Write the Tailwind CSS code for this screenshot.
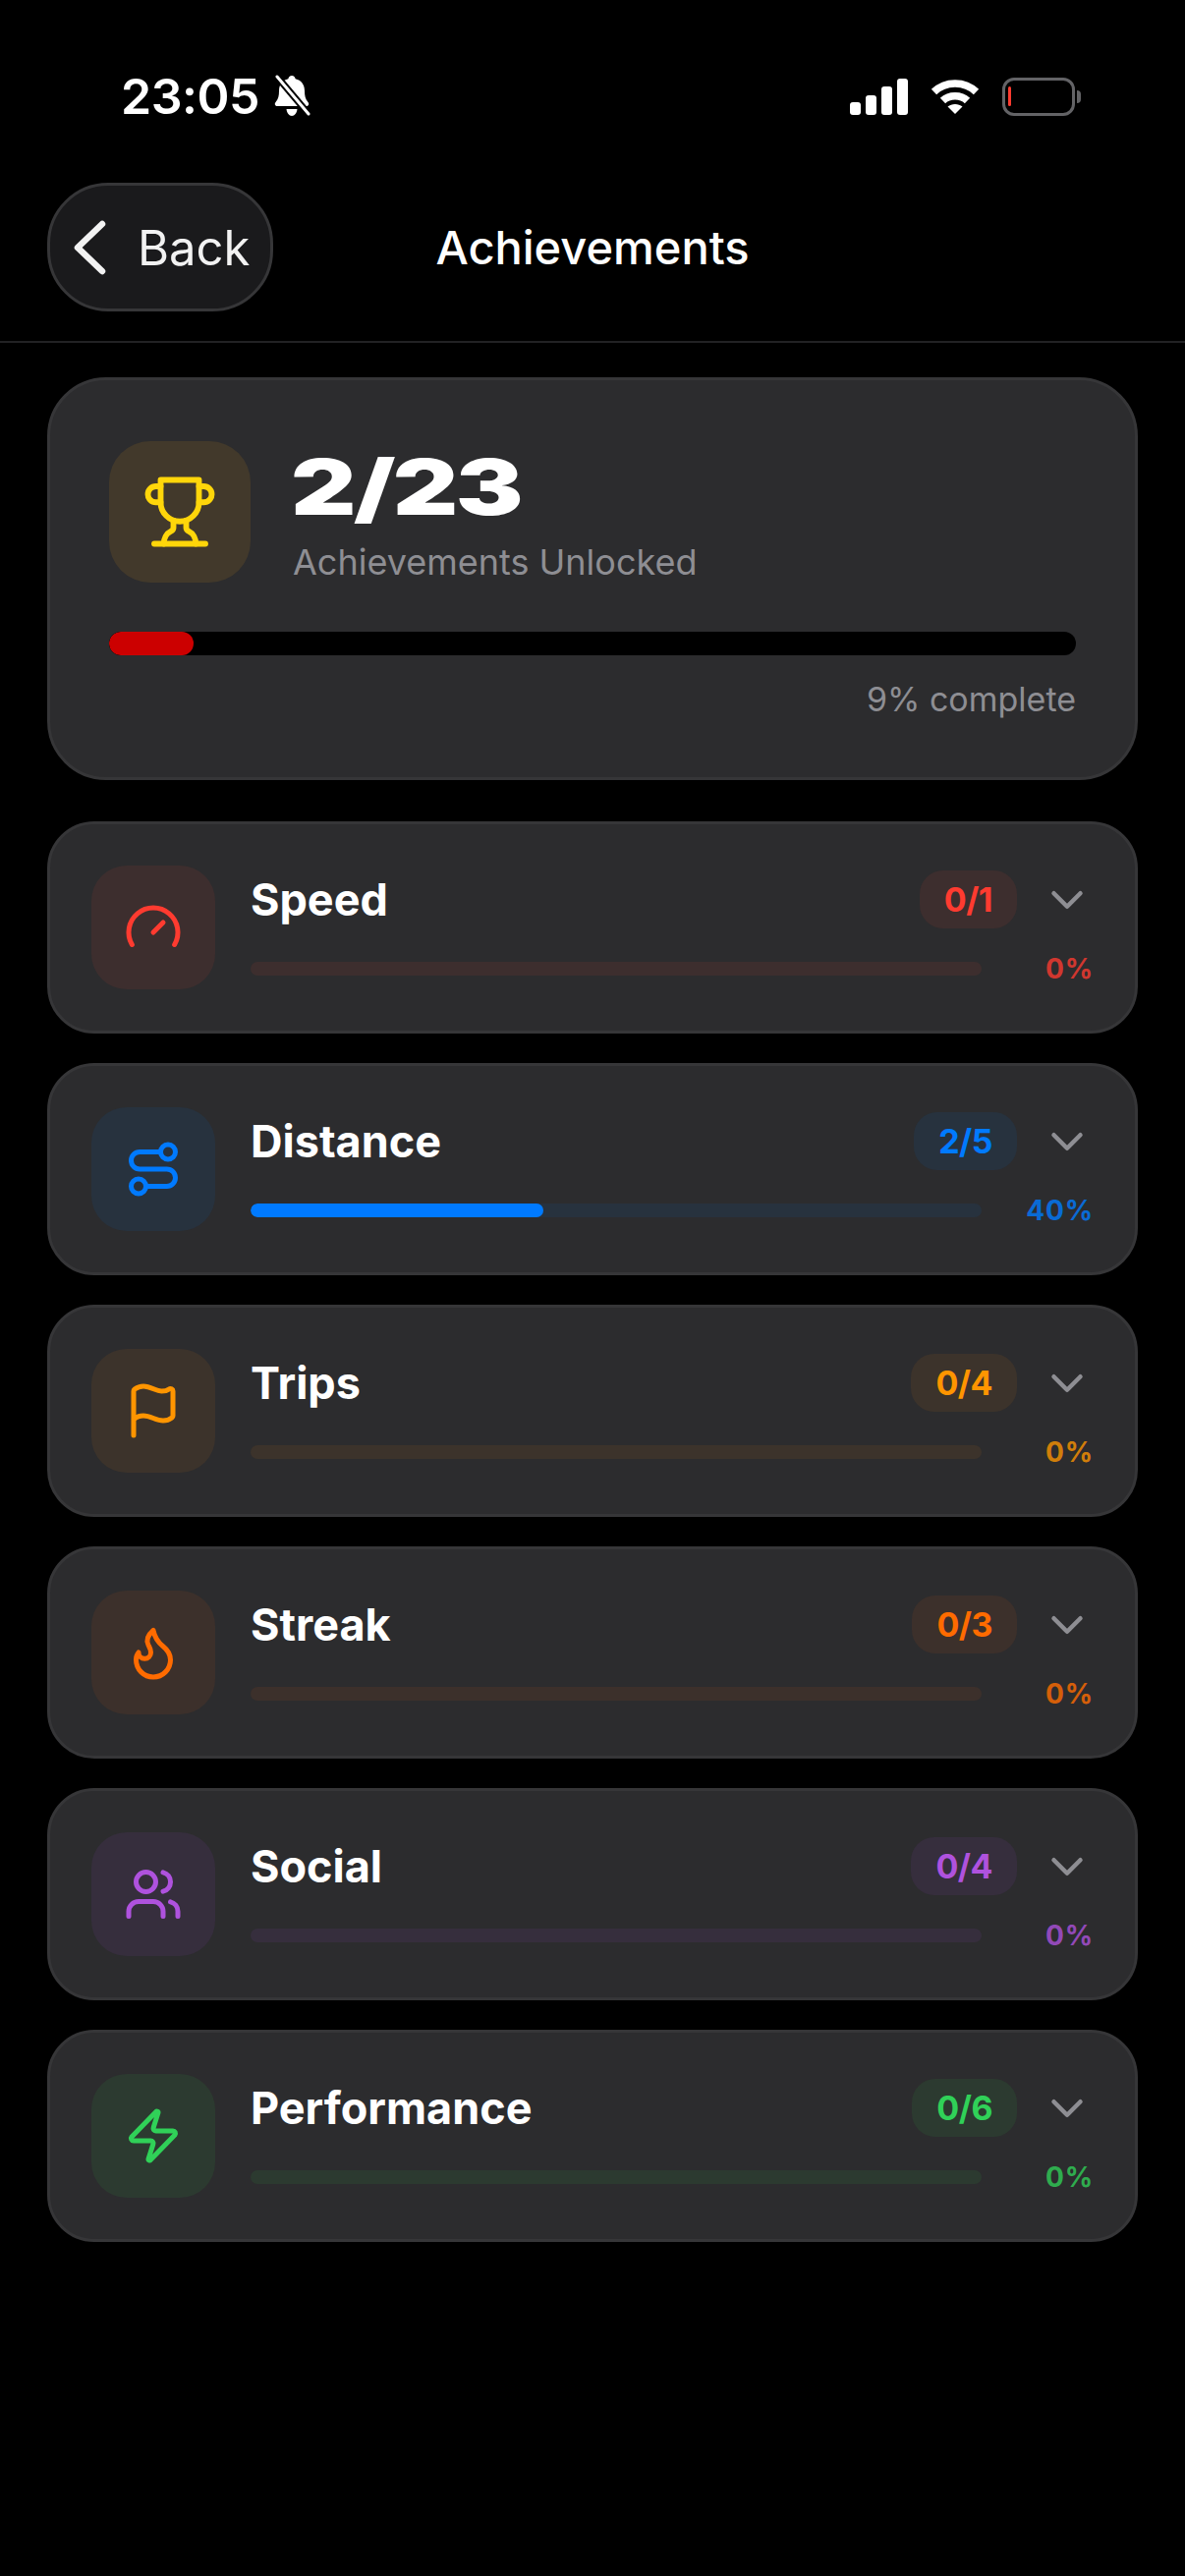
<!DOCTYPE html>
<html lang="en">
<head>
  <meta charset="UTF-8" />
  <meta name="viewport" content="width=device-width, initial-scale=1.0"/>
  <title>Achievements</title>
  <script src="https://cdn.jsdelivr.net/npm/@tailwindcss/browser@4"></script>
</head>
<body class="bg-black min-h-screen w-[1206px] h-[2622px] overflow-hidden text-white font-['Inter',sans-serif]">

  <!-- Status bar -->
  <div class="h-[148px] pt-[48px] pl-[123px] pr-[106px] flex items-center justify-between">
    <div class="flex items-center gap-[12px]">
      <span class="text-[50px] leading-none font-semibold tracking-[-0.5px]">23:05</span>
      <svg class="w-[42px] h-[44px]" viewBox="0 0 42 44" fill="white">
        <path d="M21 1c2 0 3.400 1.400 3.600 3.300 6 1.300 9.400 6 9.400 12.200 0 5 .8 8.500 3.300 11.200 1.500 1.600 1.200 4.300-1.500 4.300H6.200c-2.700 0-3-2.700-1.500-4.300C7.200 25 8 21.500 8 16.500c0-6.200 3.400-10.900 9.400-12.200C17.600 2.400 19 1 21 1z"/>
        <path d="M15.500 35h11c-.4 4-2.700 7-5.500 7s-5.100-3-5.500-7z"/>
        <path d="M6 2l32 38" stroke="black" stroke-width="7"/>
        <path d="M6 2l32 38" stroke="white" stroke-width="3" stroke-linecap="round"/>
      </svg>
    </div>
    <div class="flex items-center gap-[23px]">
      <div class="flex items-end gap-[5px] h-[37px]">
        <div class="w-[11px] h-[13px] rounded-[3px] bg-white"></div>
        <div class="w-[11px] h-[20px] rounded-[3px] bg-white"></div>
        <div class="w-[11px] h-[29px] rounded-[3px] bg-white"></div>
        <div class="w-[11px] h-[37px] rounded-[3px] bg-white"></div>
      </div>
      <svg class="w-[50px] h-[37px]" viewBox="0 0 50 37" fill="none" stroke="white" stroke-width="7.500">
        <path d="M3.500 13.500C15 2 35 2 46.500 13.500"/>
        <path d="M12.500 22.500C19 16 31 16 37.500 22.500"/>
        <path d="M25 36L17.500 28.500C21.500 25 28.500 25 32.500 28.500z" fill="white" stroke="none"/>
      </svg>
      <div class="flex items-center gap-[2px]">
        <div class="w-[74px] h-[39px] rounded-[12px] border-[3px] border-[#636366] flex items-center pl-[3px]">
          <div class="w-[3px] h-[20px] rounded-full bg-[#ff3b30]"></div>
        </div>
        <div class="w-[4px] h-[13px] rounded-r-full bg-[#636366]"></div>
      </div>
    </div>
  </div>

  <!-- Nav -->
  <div class="h-[201px] pt-[38px] pl-[48px] pr-[48px] border-b-2 border-[#222224] grid grid-cols-[1fr_auto_1fr] items-start">
    <div class="w-[230px] h-[131px] rounded-[62px] bg-[#1a1a1c] border-[3px] border-[#363638] flex items-center pl-[22px] gap-[31px]">
      <svg class="w-[36px] h-[56px]" viewBox="0 0 36 56" fill="none" stroke="#f2f2f2" stroke-width="6.500" stroke-linecap="round" stroke-linejoin="round">
        <path d="M31 4L6 28l25 24"/>
      </svg>
      <span class="pt-[2px] text-[49px] leading-none font-normal text-[#f2f2f2]">Back</span>
    </div>
    <h1 class="h-[131px] pt-[2px] flex items-center text-[47px] font-medium">Achievements</h1>
    <div></div>
  </div>

  <div class="px-[48px] pt-[35px]">

    <!-- Summary card -->
    <div class="h-[410px] rounded-[60px] bg-[#2c2c2e] border-[3px] border-[#363638] pt-[62px] px-[60px]">
      <div class="flex items-start gap-[43px]">
        <div class="w-[144px] h-[144px] rounded-[42px] bg-[#42392b] flex items-center justify-center">
          <svg class="w-[78px] h-[78px]" viewBox="0 0 24 24" fill="none" stroke="#ffd60a" stroke-width="1.800" stroke-linecap="round" stroke-linejoin="round">
            <path d="M6 9H4.500a2.500 2.500 0 0 1 0-5H6"/>
            <path d="M18 9h1.500a2.500 2.500 0 0 0 0-5H18"/>
            <path d="M4 22h16"/>
            <path d="M10 14.660V17c0 .550-.470.980-.970 1.210C7.850 18.750 7 20.240 7 22"/>
            <path d="M14 14.660V17c0 .550.470.980.970 1.210C16.150 18.750 17 20.240 17 22"/>
            <path d="M18 2H6v7a6 6 0 0 0 12 0V2Z"/>
          </svg>
        </div>
        <div class="flex flex-col gap-[18px] pt-[11px]">
          <div class="-ml-[2px] h-[72px] text-[78px] leading-[72px] font-black tracking-[-2px] origin-left scale-x-[1.32]">2/23</div>
          <div class="h-[44px] text-[36px] leading-[44px] text-[#8e8e93]">Achievements Unlocked</div>
        </div>
      </div>
      <div class="mt-[49px] h-[24px] rounded-full bg-black overflow-hidden">
        <div class="h-full w-[86px] rounded-full bg-[#cc0000]"></div>
      </div>
      <div class="mt-[23px] text-right text-[34px] leading-[44px] text-[#8e8e93]">9% complete</div>
    </div>

    <div class="mt-[42px] flex flex-col gap-[30px]">

      <!-- Speed -->
      <div class="h-[216px] rounded-[48px] bg-[#2c2c2e] border-[3px] border-[#363638] pl-[42px] pr-[39px] flex items-center gap-[36px]">
        <div class="w-[126px] h-[126px] rounded-[36px] bg-[#3d2e2e] flex items-center justify-center shrink-0">
          <svg class="w-[60px] h-[60px]" viewBox="0 0 24 24" fill="none" stroke="#ff3b30" stroke-width="2" stroke-linecap="round" stroke-linejoin="round">
            <path d="m12 14 4-4"/><path d="M3.340 19a10 10 0 1 1 17.320 0"/>
          </svg>
        </div>
        <div class="flex-1 flex flex-col pb-[2px]">
          <div class="h-[60px] flex items-center justify-between">
            <span class="text-[45px] leading-none font-bold">Speed</span>
            <div class="flex items-center gap-[24px] pr-[3px]">
              <span class="h-[59px] px-[25px] rounded-[24px] bg-[#3d2e2e] text-[#ff3b30] text-[34px] tracking-[-0.5px] font-bold flex items-center">0/1</span>
              <svg class="mt-[2px] w-[54px] h-[54px]" viewBox="0 0 24 24" fill="none" stroke="#8e8e93" stroke-width="2" stroke-linecap="round" stroke-linejoin="round"><path d="m6 9 6 6 6-6"/></svg>
            </div>
          </div>
          <div class="mt-[26px] h-[30px] flex items-center justify-between">
            <div class="w-[744px] h-[14px] rounded-full bg-[#3d2e2e]"></div>
            <span class="mr-[3px] text-[28px] leading-none font-bold tracking-[0.8px] text-[#ff3b30]/80">0%</span>
          </div>
        </div>
      </div>

      <!-- Distance -->
      <div class="h-[216px] rounded-[48px] bg-[#2c2c2e] border-[3px] border-[#363638] pl-[42px] pr-[39px] flex items-center gap-[36px]">
        <div class="w-[126px] h-[126px] rounded-[36px] bg-[#27323e] flex items-center justify-center shrink-0">
          <svg class="w-[60px] h-[60px]" viewBox="0 0 24 24" fill="none" stroke="#007aff" stroke-width="2" stroke-linecap="round" stroke-linejoin="round">
            <circle cx="6" cy="19" r="3"/><path d="M9 19h8.500a3.500 3.500 0 0 0 0-7h-11a3.500 3.500 0 0 1 0-7H15"/><circle cx="18" cy="5" r="3"/>
          </svg>
        </div>
        <div class="flex-1 flex flex-col pb-[2px]">
          <div class="h-[60px] flex items-center justify-between">
            <span class="text-[45px] leading-none font-bold">Distance</span>
            <div class="flex items-center gap-[24px] pr-[3px]">
              <span class="h-[59px] px-[25px] rounded-[24px] bg-[#27323e] text-[#007aff] text-[34px] tracking-[-0.5px] font-bold flex items-center">2/5</span>
              <svg class="mt-[2px] w-[54px] h-[54px]" viewBox="0 0 24 24" fill="none" stroke="#8e8e93" stroke-width="2" stroke-linecap="round" stroke-linejoin="round"><path d="m6 9 6 6 6-6"/></svg>
            </div>
          </div>
          <div class="mt-[26px] h-[30px] flex items-center justify-between">
            <div class="w-[744px] h-[14px] rounded-full bg-[#27323e] overflow-hidden">
              <div class="h-full rounded-full bg-[#007aff]" style="width: 40%"></div>
            </div>
            <span class="mr-[3px] text-[28px] leading-none font-bold tracking-[0.8px] text-[#007aff]/80">40%</span>
          </div>
        </div>
      </div>

      <!-- Trips -->
      <div class="h-[216px] rounded-[48px] bg-[#2c2c2e] border-[3px] border-[#363638] pl-[42px] pr-[39px] flex items-center gap-[36px]">
        <div class="w-[126px] h-[126px] rounded-[36px] bg-[#3c332b] flex items-center justify-center shrink-0">
          <svg class="w-[60px] h-[60px]" viewBox="0 0 24 24" fill="none" stroke="#ff9500" stroke-width="2" stroke-linecap="round" stroke-linejoin="round">
            <path d="M4 22V4a1 1 0 0 1 .4-.8A6 6 0 0 1 8 2c3 0 5 2 7.333 2q2 0 3.067-.8A1 1 0 0 1 20 4v10a1 1 0 0 1-.4.8A6 6 0 0 1 16 16c-3 0-5-2-8-2a6 6 0 0 0-4 1.528"/>
          </svg>
        </div>
        <div class="flex-1 flex flex-col pb-[2px]">
          <div class="h-[60px] flex items-center justify-between">
            <span class="text-[45px] leading-none font-bold">Trips</span>
            <div class="flex items-center gap-[24px] pr-[3px]">
              <span class="h-[59px] px-[25px] rounded-[24px] bg-[#3c332b] text-[#ff9500] text-[34px] tracking-[-0.5px] font-bold flex items-center">0/4</span>
              <svg class="mt-[2px] w-[54px] h-[54px]" viewBox="0 0 24 24" fill="none" stroke="#8e8e93" stroke-width="2" stroke-linecap="round" stroke-linejoin="round"><path d="m6 9 6 6 6-6"/></svg>
            </div>
          </div>
          <div class="mt-[26px] h-[30px] flex items-center justify-between">
            <div class="w-[744px] h-[14px] rounded-full bg-[#3c332b]"></div>
            <span class="mr-[3px] text-[28px] leading-none font-bold tracking-[0.8px] text-[#ff9500]/80">0%</span>
          </div>
        </div>
      </div>

      <!-- Streak -->
      <div class="h-[216px] rounded-[48px] bg-[#2c2c2e] border-[3px] border-[#363638] pl-[42px] pr-[39px] flex items-center gap-[36px]">
        <div class="w-[126px] h-[126px] rounded-[36px] bg-[#3c302b] flex items-center justify-center shrink-0">
          <svg class="w-[60px] h-[60px]" viewBox="0 0 24 24" fill="none" stroke="#ff6b00" stroke-width="2" stroke-linecap="round" stroke-linejoin="round">
            <path d="M8.500 14.500A2.500 2.500 0 0 0 11 12c0-1.380-.500-2-1-3-1.072-2.143-.224-4.054 2-6 .500 2.500 2 4.900 4 6.500 2 1.600 3 3.500 3 5.500a7 7 0 1 1-14 0c0-1.153.433-2.294 1-3a2.500 2.500 0 0 0 2.500 2.500z"/>
          </svg>
        </div>
        <div class="flex-1 flex flex-col pb-[2px]">
          <div class="h-[60px] flex items-center justify-between">
            <span class="text-[45px] leading-none font-bold">Streak</span>
            <div class="flex items-center gap-[24px] pr-[3px]">
              <span class="h-[59px] px-[25px] rounded-[24px] bg-[#3c302b] text-[#ff6b00] text-[34px] tracking-[-0.5px] font-bold flex items-center">0/3</span>
              <svg class="mt-[2px] w-[54px] h-[54px]" viewBox="0 0 24 24" fill="none" stroke="#8e8e93" stroke-width="2" stroke-linecap="round" stroke-linejoin="round"><path d="m6 9 6 6 6-6"/></svg>
            </div>
          </div>
          <div class="mt-[26px] h-[30px] flex items-center justify-between">
            <div class="w-[744px] h-[14px] rounded-full bg-[#3c302b]"></div>
            <span class="mr-[3px] text-[28px] leading-none font-bold tracking-[0.8px] text-[#ff6b00]/80">0%</span>
          </div>
        </div>
      </div>

      <!-- Social -->
      <div class="h-[216px] rounded-[48px] bg-[#2c2c2e] border-[3px] border-[#363638] pl-[42px] pr-[39px] flex items-center gap-[36px]">
        <div class="w-[126px] h-[126px] rounded-[36px] bg-[#362e3d] flex items-center justify-center shrink-0">
          <svg class="w-[60px] h-[60px]" viewBox="0 0 24 24" fill="none" stroke="#af52de" stroke-width="2" stroke-linecap="round" stroke-linejoin="round">
            <path d="M16 21v-2a4 4 0 0 0-4-4H6a4 4 0 0 0-4 4v2"/><circle cx="9" cy="7" r="4"/><path d="M22 21v-2a4 4 0 0 0-3-3.870"/><path d="M16 3.130a4 4 0 0 1 0 7.750"/>
          </svg>
        </div>
        <div class="flex-1 flex flex-col pb-[2px]">
          <div class="h-[60px] flex items-center justify-between">
            <span class="text-[45px] leading-none font-bold">Social</span>
            <div class="flex items-center gap-[24px] pr-[3px]">
              <span class="h-[59px] px-[25px] rounded-[24px] bg-[#362e3d] text-[#af52de] text-[34px] tracking-[-0.5px] font-bold flex items-center">0/4</span>
              <svg class="mt-[2px] w-[54px] h-[54px]" viewBox="0 0 24 24" fill="none" stroke="#8e8e93" stroke-width="2" stroke-linecap="round" stroke-linejoin="round"><path d="m6 9 6 6 6-6"/></svg>
            </div>
          </div>
          <div class="mt-[26px] h-[30px] flex items-center justify-between">
            <div class="w-[744px] h-[14px] rounded-full bg-[#362e3d]"></div>
            <span class="mr-[3px] text-[28px] leading-none font-bold tracking-[0.8px] text-[#af52de]/80">0%</span>
          </div>
        </div>
      </div>

      <!-- Performance -->
      <div class="h-[216px] rounded-[48px] bg-[#2c2c2e] border-[3px] border-[#363638] pl-[42px] pr-[39px] flex items-center gap-[36px]">
        <div class="w-[126px] h-[126px] rounded-[36px] bg-[#2c3a30] flex items-center justify-center shrink-0">
          <svg class="w-[60px] h-[60px]" viewBox="0 0 24 24" fill="none" stroke="#30d158" stroke-width="2" stroke-linecap="round" stroke-linejoin="round">
            <path d="M4 14a1 1 0 0 1-.780-1.630l9.900-10.200a.500.500 0 0 1 .860.460l-1.920 6.020A1 1 0 0 0 13 10h7a1 1 0 0 1 .780 1.630l-9.900 10.200a.500.500 0 0 1-.860-.460l1.920-6.020A1 1 0 0 0 11 14z"/>
          </svg>
        </div>
        <div class="flex-1 flex flex-col pb-[2px]">
          <div class="h-[60px] flex items-center justify-between">
            <span class="text-[45px] leading-none font-bold">Performance</span>
            <div class="flex items-center gap-[24px] pr-[3px]">
              <span class="h-[59px] px-[25px] rounded-[24px] bg-[#2c3a30] text-[#30d158] text-[34px] tracking-[-0.5px] font-bold flex items-center">0/6</span>
              <svg class="mt-[2px] w-[54px] h-[54px]" viewBox="0 0 24 24" fill="none" stroke="#8e8e93" stroke-width="2" stroke-linecap="round" stroke-linejoin="round"><path d="m6 9 6 6 6-6"/></svg>
            </div>
          </div>
          <div class="mt-[26px] h-[30px] flex items-center justify-between">
            <div class="w-[744px] h-[14px] rounded-full bg-[#2c3a30]"></div>
            <span class="mr-[3px] text-[28px] leading-none font-bold tracking-[0.8px] text-[#30d158]/80">0%</span>
          </div>
        </div>
      </div>

    </div>
  </div>

</body>
</html>
